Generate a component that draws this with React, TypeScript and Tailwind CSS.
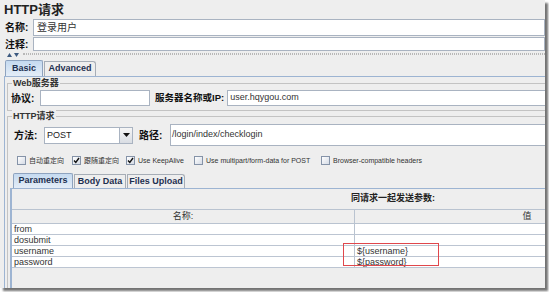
import React from "react";

const font = "font-['Liberation_Sans','Noto_Sans_CJK_SC',sans-serif]";

function Check({ checked, label, w }: { checked?: boolean; label: string; w: string }) {
  return (
    <div className={`flex items-center gap-[3px] ${w}`}>
      <div className="w-[9px] h-[9px] border border-[#8593a8] bg-linear-to-br from-white to-[#d5dbe5] flex items-center justify-center shrink-0">
        {checked && (
          <svg width="7" height="7" viewBox="0 0 7 7">
            <path d="M1 3.5 L2.8 5.5 L6 1" stroke="#111" strokeWidth="1.4" fill="none" />
          </svg>
        )}
      </div>
      <span className="text-[7px] text-[#333] whitespace-nowrap leading-none">{label}</span>
    </div>
  );
}

function Row({ name, value }: { name: string; value?: string }) {
  return (
    <div className="flex h-[11px] bg-white border-b border-[#bcc5d2] text-[9px] leading-[10px] text-[#333]">
      <div className="w-[343px] pl-[2px] border-r border-[#b9c3d0]">{name}</div>
      <div className="w-[344px] pl-[2px]">{value}</div>
    </div>
  );
}

export default function App() {
  return (
    <div className={`w-[549px] h-[292px] bg-white ${font}`}>
      <div className="w-[545px] h-[288px] bg-[#eeeeee] overflow-hidden shadow-[3px_3px_2px_rgba(0,0,0,0.55)] flex flex-col text-[#111]">
        {/* title */}
        <div className="h-[19px] pl-[4px] pt-[1px] text-[13px] font-bold leading-[17px] text-[#222]">HTTP请求</div>
        {/* 名称 */}
        <div className="h-[17px] flex items-center">
          <div className="w-[33px] pl-[5px] text-[10px] font-bold">名称:</div>
          <div className="flex-1 h-full bg-white border border-[#a9b3c1] flex items-center pl-[3px] text-[10px] text-[#333]">登录用户</div>
        </div>
        <div className="h-[1px]" />
        {/* 注释 */}
        <div className="h-[14px] flex items-center">
          <div className="w-[33px] pl-[5px] text-[10px] font-bold">注释:</div>
          <div className="flex-1 h-full bg-white border border-[#a9b3c1]" />
        </div>
        {/* separator */}
        <div className="h-[9px] flex items-start pt-[1px]">
          <div className="flex gap-[2px] pl-[7px] pt-[1px]">
            <svg width="5" height="4" viewBox="0 0 5 4"><path d="M0 4 L2.5 0 L5 4Z" fill="#3d5a80" /></svg>
            <svg width="5" height="4" viewBox="0 0 5 4"><path d="M0 0 L2.5 4 L5 0Z" fill="#3d5a80" /></svg>
          </div>
          <div className="flex-1 ml-[4px] mt-[1px] h-[2px] border-t border-b border-dotted border-[#b8b8b8]" />
        </div>
        {/* tabs */}
        <div className="h-[16px] flex items-end pl-[5px]">
          <div className="h-[16px] w-[38px] border border-b-0 border-[#8ea3bf] rounded-t-[2px] bg-linear-to-b from-[#c5daf0] to-[#e4edf7] text-[9px] font-bold text-[#1e3050] flex items-center justify-center">Basic</div>
          <div className="h-[15px] w-[52px] ml-[1px] border border-b-0 border-[#a6adb6] rounded-tr-[3px] bg-[#eeeeee] text-[9px] font-bold text-[#1e3050] flex items-center justify-center">Advanced</div>
        </div>
        {/* Basic panel */}
        <div className="flex-1 ml-[4px] border-t border-l border-[#9db4d2] w-[800px] flex flex-col">
          {/* Web group */}
          <div className="relative mt-[6px] ml-[2px] h-[28px] border border-[#c3c3c3] pt-[6px] pl-[3px]">
            <div className="absolute top-[-7px] left-[4px] bg-[#eeeeee] px-[1px] text-[9px] font-bold text-[#333] leading-[12px]">Web服务器</div>
            <div className="h-[16px] flex items-center">
              <div className="w-[29px] shrink-0 text-[10px] font-bold">协议:</div>
              <div className="w-[110px] shrink-0 h-full bg-white border border-[#a9b3c1]" />
              <div className="ml-[5px] shrink-0 text-[9.5px] font-bold whitespace-nowrap">服务器名称或IP:</div>
              <div className="ml-[3px] w-[600px] shrink-0 h-full bg-white border border-[#a9b3c1] flex items-center pl-[2px] text-[9px] text-[#333]">user.hqygou.com</div>
            </div>
          </div>
          {/* HTTP group */}
          <div className="relative mt-[5px] ml-[2px] flex-1 border-t border-l border-[#c3c3c3] pt-[7px] flex flex-col">
            <div className="absolute top-[-7px] left-[4px] bg-[#eeeeee] px-[1px] text-[9px] font-bold text-[#333] leading-[12px]">HTTP请求</div>
            <div className="h-[22px] flex items-center pl-[6px]">
              <div className="w-[30px] text-[10px] font-bold">方法:</div>
              <div className="w-[89px] h-[17px] bg-white border border-[#a9b3c1] flex items-stretch">
                <div className="flex-1 pl-[2px] text-[9px] leading-[15px] text-[#222]">POST</div>
                <div className="w-[13px] border-l border-[#a9b3c1] bg-linear-to-b from-[#f6f6f6] to-[#d9dde3] flex items-center justify-center">
                  <svg width="7" height="4" viewBox="0 0 7 4"><path d="M0 0 L7 0 L3.5 4Z" fill="#111" /></svg>
                </div>
              </div>
              <div className="ml-[6px] w-[31px] text-[10px] font-bold">路径:</div>
              <div className="w-[600px] h-full bg-white border border-[#a9b3c1] flex items-center pl-[1px] text-[9px] text-[#333]">/login/index/checklogin</div>
            </div>
            {/* checkboxes */}
            <div className="mt-[10px] h-[9px] flex items-center pl-[9px]">
              <Check label="自动重定向" w="w-[55px]" />
              <Check checked label="跟随重定向" w="w-[54px]" />
              <Check checked label="Use KeepAlive" w="w-[68px]" />
              <Check label="Use multipart/form-data for POST" w="w-[127px]" />
              <Check label="Browser-compatible headers" w="w-[120px]" />
            </div>
            {/* inner tabs */}
            <div className="mt-[8px] h-[15px] flex items-end pl-[5px]">
              <div className="h-[15px] w-[60px] border border-b-0 border-[#8ea3bf] rounded-t-[2px] bg-linear-to-b from-[#c5daf0] to-[#e4edf7] text-[9px] font-bold text-[#1e3050] flex items-center justify-center">Parameters</div>
              <div className="h-[14px] w-[52px] ml-[1px] border border-b-0 border-[#a6adb6] bg-[#eeeeee] text-[9px] font-bold text-[#1e3050] flex items-center justify-center">Body Data</div>
              <div className="h-[14px] w-[58px] ml-[1px] border border-b-0 border-[#a6adb6] rounded-tr-[3px] bg-[#eeeeee] text-[9px] font-bold text-[#1e3050] flex items-center justify-center">Files Upload</div>
            </div>
            {/* inner panel */}
            <div className="flex-1 ml-[2px] border-t border-l-2 border-[#9db4d2] flex flex-col">
              <div className="h-[20px] w-[762px] flex items-center justify-center text-[9px] font-bold text-[#222]">同请求一起发送参数:</div>
              <div className="flex h-[15px] border-t border-b border-[#b9c3d0] text-[9px] text-[#333]">
                <div className="w-[343px] border-r border-[#b9c3d0] flex items-center justify-center">名称:</div>
                <div className="w-[344px] flex items-center justify-center">值</div>
              </div>
              <div className="relative">
                <Row name="from" />
                <Row name="dosubmit" />
                <Row name="username" value="${username}" />
                <Row name="password" value="${password}" />
                <div className="absolute left-[331px] top-[19px] w-[96px] h-[23px] border border-[#e0474c]" />
              </div>
            </div>
          </div>
        </div>
      </div>
    </div>
  );
}
